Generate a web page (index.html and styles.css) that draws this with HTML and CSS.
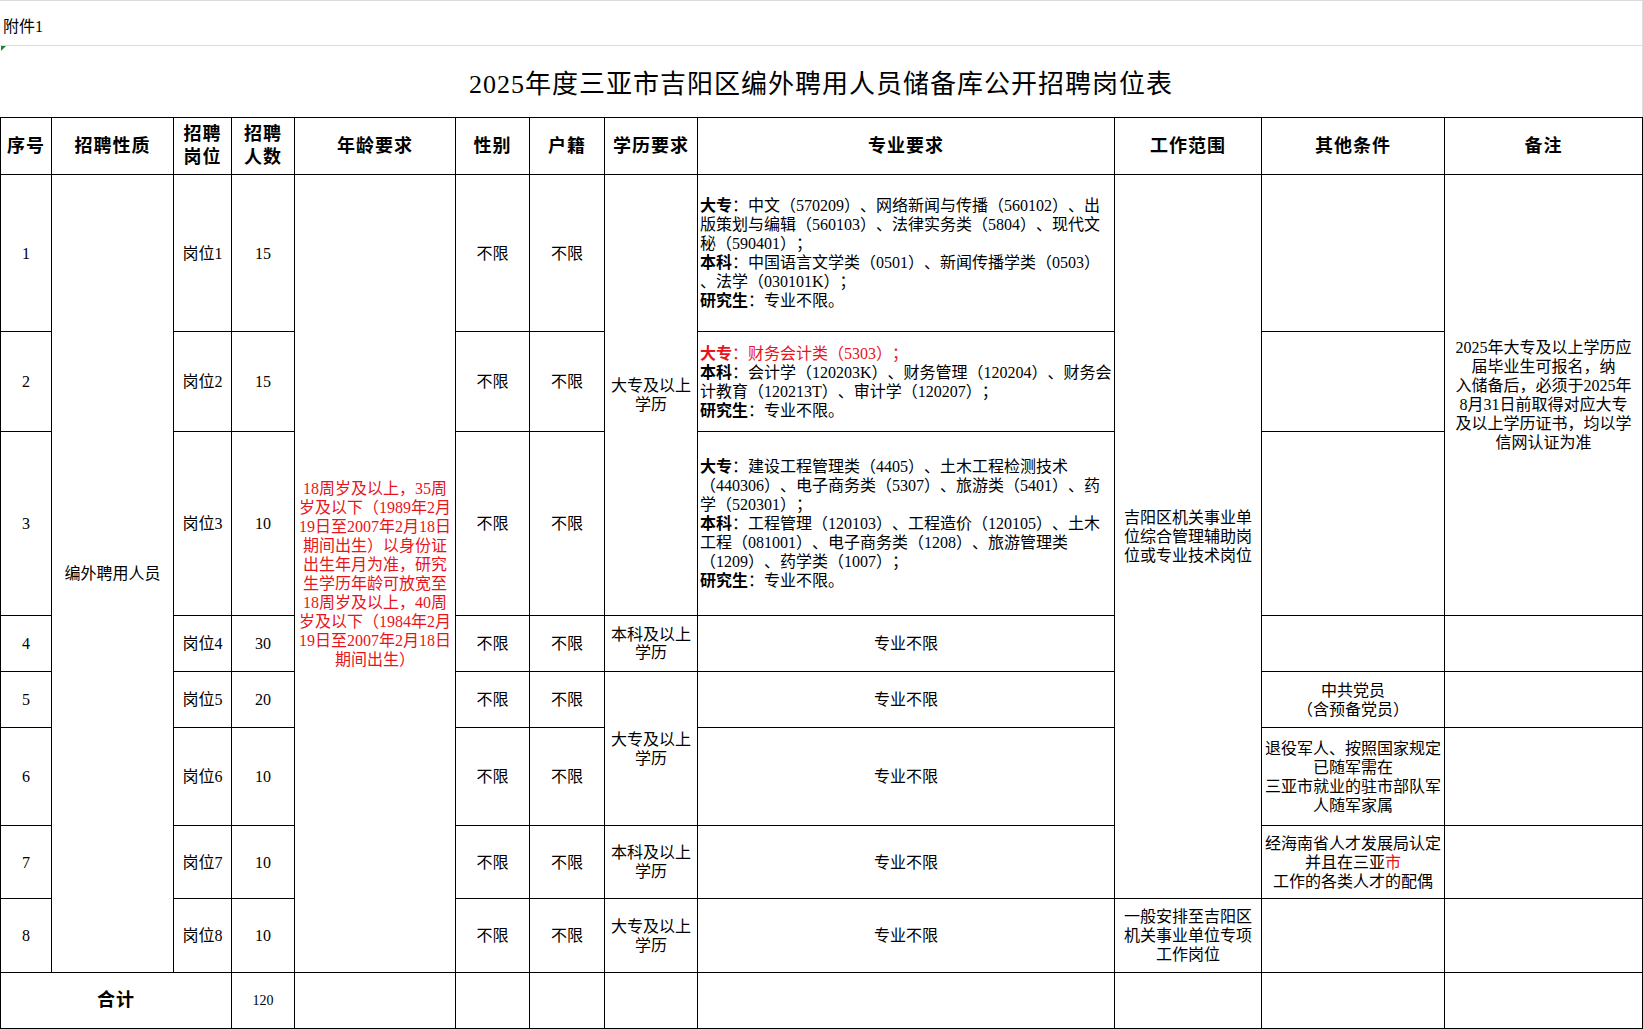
FILE: index.html
```html
<!DOCTYPE html>
<html lang="zh-CN">
<head>
<meta charset="utf-8">
<title>2025年度三亚市吉阳区编外聘用人员储备库公开招聘岗位表</title>
<link rel="stylesheet" href="styles.css">
</head>
<body>
<div class="sheet">
  <div class="annex">附件1</div>
  <div class="title-row">
    <span class="marker"></span>
    <h1 class="title">2025年度三亚市吉阳区编外聘用人员储备库公开招聘岗位表</h1>
  </div>
  <table class="grid">
    <colgroup>
      <col class="w-no">
      <col class="w-type">
      <col class="w-post">
      <col class="w-num">
      <col class="w-age">
      <col class="w-sex">
      <col class="w-home">
      <col class="w-edu">
      <col class="w-major">
      <col class="w-scope">
      <col class="w-other">
      <col class="w-note">
    </colgroup>
    <thead>
      <tr class="r-head">
        <th>序号</th>
        <th>招聘性质</th>
        <th>招聘<br>岗位</th>
        <th>招聘<br>人数</th>
        <th>年龄要求</th>
        <th>性别</th>
        <th>户籍</th>
        <th>学历要求</th>
        <th>专业要求</th>
        <th>工作范围</th>
        <th>其他条件</th>
        <th>备注</th>
      </tr>
    </thead>
    <tbody>
      <tr class="r1">
        <td>1</td>
        <td rowspan="8">编外聘用人员</td>
        <td>岗位1</td>
        <td>15</td>
        <td rowspan="8" class="red">18周岁及以上，35周<br>岁及以下（1989年2月<br>19日至2007年2月18日<br>期间出生）以身份证<br>出生年月为准，研究<br>生学历年龄可放宽至<br>18周岁及以上，40周<br>岁及以下（1984年2月<br>19日至2007年2月18日<br>期间出生）</td>
        <td>不限</td>
        <td>不限</td>
        <td rowspan="3">大专及以上<br>学历</td>
        <td class="spec"><b>大专</b>：中文（570209）、网络新闻与传播（560102）、出<br>版策划与编辑（560103）、法律实务类（5804）、现代文<br>秘（590401）；<br><b>本科</b>：中国语言文学类（0501）、新闻传播学类（0503）<br>、法学（030101K）；<br><b>研究生</b>：专业不限。</td>
        <td rowspan="7">吉阳区机关事业单<br>位综合管理辅助岗<br>位或专业技术岗位</td>
        <td></td>
        <td rowspan="3">2025年大专及以上学历应<br>届毕业生可报名，纳<br>入储备后，必须于2025年<br>8月31日前取得对应大专<br>及以上学历证书，均以学<br>信网认证为准</td>
      </tr>
      <tr class="r2">
        <td>2</td>
        <td>岗位2</td>
        <td>15</td>
        <td>不限</td>
        <td>不限</td>
        <td class="spec"><span class="red"><b>大专</b>：财务会计类（5303）；</span><br><b>本科</b>：会计学（120203K）、财务管理（120204）、财务会<br>计教育（120213T）、审计学（120207）；<br><b>研究生</b>：专业不限。</td>
        <td></td>
      </tr>
      <tr class="r3">
        <td>3</td>
        <td>岗位3</td>
        <td>10</td>
        <td>不限</td>
        <td>不限</td>
        <td class="spec"><b>大专</b>：建设工程管理类（4405）、土木工程检测技术<br>（440306）、电子商务类（5307）、旅游类（5401）、药<br>学（520301）；<br><b>本科</b>：工程管理（120103）、工程造价（120105）、土木<br>工程（081001）、电子商务类（1208）、旅游管理类<br>（1209）、药学类（1007）；<br><b>研究生</b>：专业不限。</td>
        <td></td>
      </tr>
      <tr class="r4">
        <td>4</td>
        <td>岗位4</td>
        <td>30</td>
        <td>不限</td>
        <td>不限</td>
        <td class="tight">本科及以上<br>学历</td>
        <td>专业不限</td>
        <td></td>
        <td></td>
      </tr>
      <tr class="r5">
        <td>5</td>
        <td>岗位5</td>
        <td>20</td>
        <td>不限</td>
        <td>不限</td>
        <td rowspan="2">大专及以上<br>学历</td>
        <td>专业不限</td>
        <td>中共党员<br>（含预备党员）</td>
        <td></td>
      </tr>
      <tr class="r6">
        <td>6</td>
        <td>岗位6</td>
        <td>10</td>
        <td>不限</td>
        <td>不限</td>
        <td>专业不限</td>
        <td>退役军人、按照国家规定<br>已随军需在<br>三亚市就业的驻市部队军<br>人随军家属</td>
        <td></td>
      </tr>
      <tr class="r7">
        <td>7</td>
        <td>岗位7</td>
        <td>10</td>
        <td>不限</td>
        <td>不限</td>
        <td>本科及以上<br>学历</td>
        <td>专业不限</td>
        <td>经海南省人才发展局认定<br>并且在三亚<span class="red">市</span><br>工作的各类人才的配偶</td>
        <td></td>
      </tr>
      <tr class="r8">
        <td>8</td>
        <td>岗位8</td>
        <td>10</td>
        <td>不限</td>
        <td>不限</td>
        <td>大专及以上<br>学历</td>
        <td>专业不限</td>
        <td>一般安排至吉阳区<br>机关事业单位专项<br>工作岗位</td>
        <td></td>
        <td></td>
      </tr>
      <tr class="r-total">
        <td colspan="3" class="total-label">合计</td>
        <td class="total-num">120</td>
        <td></td>
        <td></td>
        <td></td>
        <td></td>
        <td></td>
        <td></td>
        <td></td>
        <td></td>
      </tr>
    </tbody>
  </table>
</div>
</body>
</html>
```

FILE: styles.css
```css
html, body {
  margin: 0;
  padding: 0;
  background: #ffffff;
}

body {
  font-family: "Liberation Serif", "Noto Sans CJK SC", serif;
  color: #000000;
  width: 1643px;
  height: 1029px;
  overflow: hidden;
  text-spacing-trim: space-all;
}

.sheet {
  width: 1643px;
}

.annex {
  box-sizing: border-box;
  height: 46px;
  border-top: 1px solid #dcdcdc;
  border-bottom: 1px solid #dcdcdc;
  border-right: 1px solid #dcdcdc;
  padding: 4px 0 0 3px;
  display: flex;
  align-items: center;
  font-size: 16px;
}

.title-row {
  position: relative;
  box-sizing: border-box;
  height: 71px;
  border-right: 1px solid #dcdcdc;
  padding-top: 24px;
}

.marker {
  position: absolute;
  left: 1px;
  top: 0;
  width: 0;
  height: 0;
  border-top: 5px solid #1a8a2a;
  border-right: 5px solid transparent;
}

.title {
  margin: 0;
  width: 1642px;
  font-size: 26px;
  font-weight: normal;
  line-height: 30px;
  letter-spacing: 1px;
  text-align: center;
}

.grid {
  border-collapse: collapse;
  table-layout: fixed;
  width: 1642px;
}

.w-no { width: 51px; }
.w-type { width: 122px; }
.w-post { width: 58px; }
.w-num { width: 63px; }
.w-age { width: 161px; }
.w-sex { width: 74px; }
.w-home { width: 75px; }
.w-edu { width: 93px; }
.w-major { width: 417px; }
.w-scope { width: 147px; }
.w-other { width: 183px; }
.w-note { width: 198px; }

.grid th,
.grid td {
  border: 1px solid #000000;
  padding: 0 1px;
  text-align: center;
  vertical-align: middle;
  font-size: 16px;
  line-height: 19px;
  font-weight: normal;
  white-space: nowrap;
  overflow: hidden;
}

.grid th {
  font-size: 18px;
  font-weight: bold;
  line-height: 23px;
  letter-spacing: 1px;
}

.grid td.spec {
  text-align: left;
  padding-left: 2px;
}

.spec b {
  font-weight: bold;
}

.red {
  color: #e8141b;
}

.grid td.red {
  color: #e8141b;
}

.r-head { height: 57px; }
.r1 { height: 157px; }
.r2 { height: 100px; }
.r3 { height: 184px; }
.r4 { height: 56px; }
.r5 { height: 56px; }
.r6 { height: 98px; }
.r7 { height: 73px; }
.r8 { height: 74px; }
.r-total { height: 56px; }

.grid td.tight {
  line-height: 18px;
}

.grid td.total-label {
  font-size: 18px;
  font-weight: bold;
  letter-spacing: 1px;
}

.grid td.total-num {
  font-size: 14px;
}
```
